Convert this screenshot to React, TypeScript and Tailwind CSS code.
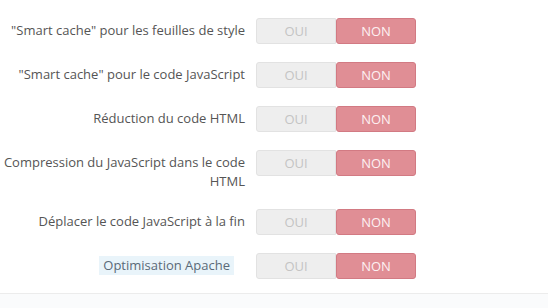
const rows = [
  { label: '"Smart cache" pour les feuilles de style' },
  { label: '"Smart cache" pour le code JavaScript' },
  { label: 'Réduction du code HTML' },
  { label: 'Compression du JavaScript dans le code HTML' },
  { label: 'Déplacer le code JavaScript à la fin' },
  { label: 'Optimisation Apache', hint: true },
];

function Toggle() {
  return (
    <div className="flex w-[160px] h-[26px] text-[13px] leading-none">
      <div className="flex-1 flex items-center justify-center bg-[#eeeeee] border border-[#e2e2e2] rounded-l-[3px] text-[#c4c4c4]">
        OUI
      </div>
      <div className="flex-1 flex items-center justify-center bg-[#e08e95] border border-[#d27a83] rounded-[3px] text-[#fdf1f2]">
        NON
      </div>
    </div>
  );
}

export default function App() {
  return (
    <div className="w-[548px] h-[308px] bg-white overflow-hidden" style={{ fontFamily: '"Open Sans", sans-serif' }}>
      <div className="h-[294px] border-b border-[#ececec] pt-[18px]">
        {rows.map((row) => (
          <div key={row.label} className="flex items-start mb-[18px]">
            <div className="w-[245px] pt-[3px] text-right text-[13px] leading-[19px] text-[#555555]">
              {row.hint ? (
                <span className="inline-block mr-[11px] px-[4px] bg-[#e9f4fa] text-[#5a6a78]">{row.label}</span>
              ) : (
                <span className="inline-block max-w-[242px]">{row.label}</span>
              )}
            </div>
            <div className="ml-[11px]">
              <Toggle />
            </div>
          </div>
        ))}
      </div>
      <div className="h-[14px] bg-[#fafbfc]"></div>
    </div>
  );
}
